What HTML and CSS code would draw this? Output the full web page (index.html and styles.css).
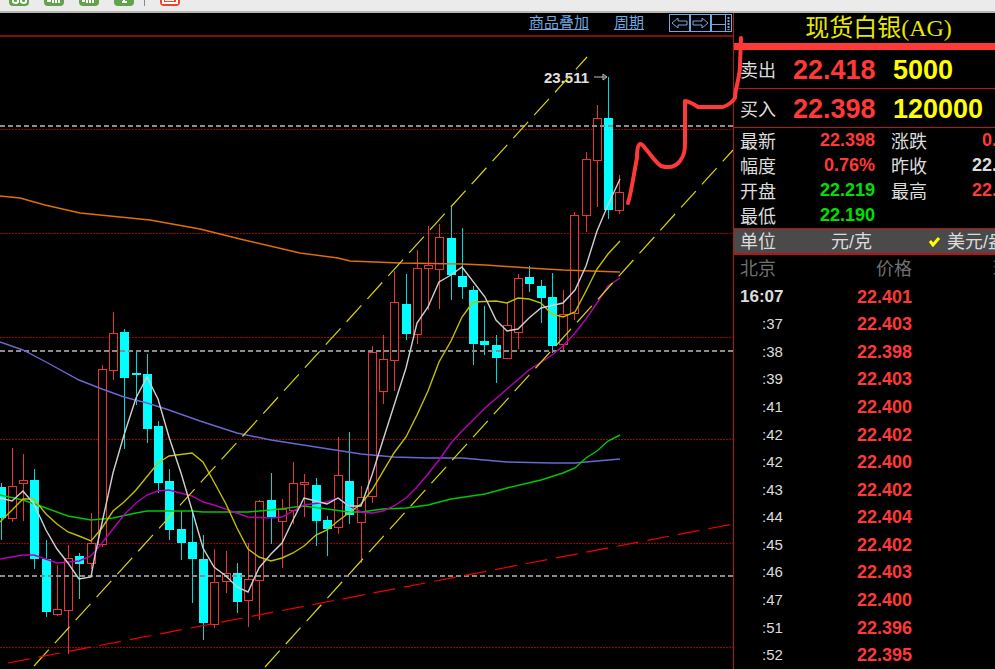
FILE: index.html
```html
<!DOCTYPE html>
<html lang="zh-CN">
<head>
    <meta charset="UTF-8">
    <title>现货白银(AG)</title>
    <meta name="viewport" content="width=device-width, initial-scale=1">
    <link rel="stylesheet" href="styles.css">
</head>
<body>
    <header class="toolbar">
        <button class="tool" aria-label="工具一"><svg width="20" height="20"><path d="M4 12v4q3 2 5 0v-4M12 12v4q3 2 5 0v-4"/></svg></button>
        <button class="tool" aria-label="工具二"><svg width="20" height="20"><path d="M3 15h4M9 17v-4M12 17v-4M15 17v-4"/></svg></button>
        <button class="tool" aria-label="工具三"><svg width="20" height="20"><path d="M3 15h3M8 17v-4M11 17v-4M14 17v-4"/></svg></button>
        <button class="tool" aria-label="工具四"><svg width="20" height="20"><path d="M10 9v7M8 16h5"/></svg></button>
        <span class="separator"></span>
        <button class="tool alert" aria-label="提醒"><svg width="20" height="20"><path d="M3 10v7h14v-7M5 14h9"/></svg></button>
    </header>

    <main class="terminal">
        <section class="chart-panel">
            <nav class="chart-nav">
                <a href="#">商品叠加</a>
                <a href="#">周期</a>
                <div class="nav-buttons">
                    <button aria-label="向左"><svg width="19" height="16"><path d="M2 8l6-5v3h9v4H8v3z"/></svg></button>
                    <button aria-label="向右"><svg width="19" height="16"><path d="M17 8l-6-5v3H2v4h9v3z"/></svg></button>
                    <button aria-label="布局"><svg width="19" height="16"><path d="M0 9.5h13M13.5 0v16"/><path class="dots" d="M16.5 2v13"/></svg></button>
                </div>
            </nav>
            <div class="chart">
                <svg id="kline" viewBox="0 37 733 632" preserveAspectRatio="none">
                    <g class="grid">
                        <path d="M0 129.5H733M0 233.5H733M0 337.5H733M0 439.5H733M0 543.5H733M0 647.5H733"/>
                    </g>
                    <g id="candles"></g>
                    <g class="level">
                        <path d="M0 126H733M0 351H733M0 576H733"/>
                    </g>
                    <g id="averages"></g>
                    <text class="peak" x="544" y="83">23.511</text>
                    <path class="channel" d="M34 666L587 57"/>
                    <path class="channel" d="M265 667L733 150"/>
                    <path class="support" d="M8 663L733 524"/>
                    <path class="arrow" d="M594 77H606M603 74L607 77L603 80z"/>
                </svg>
            </div>
        </section>

        <aside class="quote">
            <h1>现货白银(AG)</h1>
            <div class="deal"><span>卖出</span><b class="up">22.418</b><b class="volume">5000</b></div>
            <div class="deal"><span>买入</span><b class="up">22.398</b><b class="volume">120000</b></div>
            <div class="stats">
                <span>最新</span><b class="up">22.398</b><span>涨跌</span><b class="up">0.</b>
                <span>幅度</span><b class="up">0.76%</b><span>昨收</span><b>22.</b>
                <span>开盘</span><b class="down">22.219</b><span>最高</span><b class="up">22.</b>
                <span>最低</span><b class="down">22.190</b>
            </div>
            <div class="unit">
                <span>单位</span>
                <span class="gram">元/克</span>
                <svg width="12" height="12"><path d="M1 6l3 4l6-7"/></svg>
                <span>美元/盎</span>
            </div>
            <div class="ticks">
                <table>
                    <thead>
                        <tr><th>北京</th><th>价格</th><th>现</th></tr>
                    </thead>
                    <tbody id="ticks"></tbody>
                </table>
            </div>
        </aside>

        <!-- hand-drawn forecast, runs from the last candle over the quote panel -->
        <svg class="forecast" width="995" height="669">
            <path d="M628 203C632 190 634 172 637 158C637 143 640 141 645 148C651 155 655 162 661 166C668 168 675 168 680 161C685 155 685 148 685 140V101Q691 102 698 107H723Q731 104 735 98C735 88 740 78 740 65L741 38"/>
        </svg>
    </main>

    <script>
        const step = 11.25;

        // [direction, high, body top, body bottom, low]
        const candles = [
            ['d', 483, 487, 518, 540], ['u', 448, 486, 519, 522], ['u', 454, 480, 484, 521],
            ['d', 469, 480, 559, 569], ['d', 540, 559, 612, 617], ['u', 565, 609, 615, 616],
            ['u', 545, 558, 611, 654], ['d', 553, 556, 564, 599], ['u', 513, 543, 564, 569],
            ['u', 365, 369, 545, 547], ['u', 312, 333, 371, 380], ['d', 329, 332, 378, 449],
            ['d', 350, 373, 375, 405], ['d', 354, 374, 429, 443], ['d', 421, 426, 483, 493],
            ['d', 469, 481, 530, 540], ['d', 511, 529, 543, 560], ['d', 510, 542, 559, 603],
            ['d', 535, 559, 623, 640], ['u', 549, 582, 625, 628], ['u', 551, 573, 582, 593],
            ['d', 563, 573, 602, 613], ['u', 543, 579, 601, 627], ['u', 500, 501, 581, 620],
            ['d', 473, 500, 517, 544], ['u', 499, 509, 522, 568], ['u', 462, 483, 511, 524],
            ['u', 474, 482, 485, 517], ['d', 478, 485, 521, 546], ['d', 516, 520, 529, 556],
            ['u', 437, 475, 528, 534], ['d', 432, 481, 515, 524], ['u', 486, 497, 523, 563],
            ['u', 346, 352, 497, 503], ['u', 335, 359, 392, 404], ['u', 271, 302, 361, 391],
            ['d', 274, 304, 334, 340], ['u', 250, 268, 335, 344], ['u', 226, 265, 269, 310],
            ['u', 224, 237, 270, 309], ['d', 207, 238, 275, 300], ['d', 228, 276, 287, 299],
            ['d', 286, 290, 344, 365], ['d', 306, 341, 345, 355], ['d', 335, 345, 358, 383],
            ['u', 302, 325, 359, 359], ['u', 274, 278, 333, 349], ['d', 266, 277, 284, 292],
            ['d', 280, 286, 298, 323], ['d', 273, 297, 346, 353], ['u', 290, 314, 345, 350],
            ['u', 212, 215, 314, 320], ['u', 152, 159, 216, 232], ['u', 105, 118, 161, 207],
            ['d', 77, 118, 210, 219], ['u', 175, 192, 211, 214]
        ];

        document.getElementById('candles').innerHTML = candles.map(([dir, high, top, bottom, low], i) => {
            const x = Math.floor(i * step + 1) + 0.5;
            const body = dir === 'u'
                ? `<rect x="${x - 4}" y="${top + 0.5}" width="8" height="${Math.max(bottom - top - 1, 1)}"/>`
                : `<rect x="${x - 4.5}" y="${top}" width="9" height="${bottom - top}"/>`;
            return `<g class="${dir === 'u' ? 'rise' : 'fall'}"><path d="M${x} ${high}V${top}M${x} ${bottom}V${low}"/>${body}</g>`;
        }).join('');

        const averages = {
            orange: '0,196 20,198 45,205 80,213 110,216 150,220 200,229 240,239 300,253 338,258 350,261 400,263 462,264 485,265 529,268 563,270 620,272',
            blue: '0,342 23,350 46,362 79,380 102,389 124,397 147,403 169,410 200,421 237,433 271,440 316,447 361,454 394,457 428,458 462,458 507,462 552,463 575,463 597,461 620,459',
            green: '0,495 23,500 46,508 68,516 91,520 113,518 136,513 147,511 192,511 203,512 248,512 271,510 304,506 327,509 349,512 361,512 383,509 406,508 428,505 451,499 485,494 507,488 541,480 563,473 575,468 586,458 597,451 608,441 620,435',
            magenta: '0,559 23,555 34,555 57,563 79,561 91,556 102,543 124,515 136,503 147,495 158,491 169,490 192,496 203,502 214,505 248,517 271,518 282,517 304,505 327,502 338,498 349,506 361,512 372,513 383,511 394,506 406,498 417,487 428,474 439,460 451,443 462,431 485,408 507,389 529,370 552,355 563,346 575,333 586,319 597,303 608,286 620,278',
            yellow: '0,522 23,499 34,499 46,514 57,524 68,532 79,536 91,541 102,528 113,511 124,502 136,490 158,463 169,456 192,453 203,462 214,482 226,504 237,528 248,549 259,557 271,561 282,558 293,553 304,546 316,535 327,530 338,521 361,504 372,490 394,453 406,437 417,415 428,391 439,362 451,341 462,317 473,302 496,301 507,303 518,298 529,299 541,303 552,314 563,317 575,312 586,291 597,269 608,254 620,241',
            white: '0,498 12,501 23,491 34,504 46,530 57,549 68,563 79,579 91,577 95,555 102,523 113,473 124,435 136,398 147,377 158,399 169,437 181,473 192,510 203,548 214,567 226,576 237,587 248,592 259,568 271,554 282,543 293,520 304,498 316,501 327,504 338,498 349,506 361,506 372,475 383,440 406,368 417,323 428,307 439,282 451,275 462,267 485,297 496,320 507,331 518,329 529,318 541,308 563,303 575,290 586,266 597,231 608,205 620,179'
        };

        document.getElementById('averages').innerHTML = Object.entries(averages)
            .map(([name, points]) => `<polyline class="${name}" points="${points}"/>`).join('');

        const ticks = [
            ['16:07', '22.401'], [':37', '22.403'], [':38', '22.398'], [':39', '22.403'],
            [':41', '22.400'], [':42', '22.402'], [':42', '22.400'], [':43', '22.402'],
            [':44', '22.404'], [':45', '22.402'], [':46', '22.403'], [':47', '22.400'],
            [':51', '22.396'], [':52', '22.395']
        ];

        document.getElementById('ticks').innerHTML = ticks
            .map(([time, price]) => `<tr><td>${time}</td><td>${price}</td><td></td></tr>`).join('');
    </script>
</body>
</html>
```
FILE: styles.css
```css
:root {
    --line: #b81414;
    --up: #ff3838;
    --down: #00e000;
    --text: #dcdcdc;
    --link: #70a8e0;
}

* {
    box-sizing: border-box;
}

body {
    display: flex;
    flex-direction: column;
    height: 100vh;
    margin: 0;
    overflow: hidden;
    background: #000;
    color: var(--text);
    font-family: "Liberation Sans", "Noto Sans CJK SC", sans-serif;
    font-size: 18px;
}

button {
    padding: 0;
    border: 0;
    background: none;
}

svg {
    display: block;
}

.toolbar {
    display: flex;
    flex: none;
    align-items: flex-end;
    gap: 15px;
    height: 13px;
    padding: 0 9px 5px;
    background: #ebebeb;
    border-bottom: 2px solid #b8b4b0;
    overflow: hidden;
}

.tool {
    flex: none;
    width: 20px;
    height: 20px;
    border-radius: 4px;
    background: #60a34c;
}

.tool path {
    fill: none;
    stroke: #fff;
    stroke-width: 2;
}

.alert {
    background: #f04428;
}

.separator {
    width: 1px;
    height: 20px;
    margin-left: -5px;
    background: #888;
}

.terminal {
    display: flex;
    flex: 1;
    min-height: 0;
}

.chart-panel {
    display: flex;
    flex: 1;
    flex-direction: column;
    min-width: 0;
}

.chart-nav {
    display: flex;
    flex: none;
    align-items: center;
    justify-content: flex-end;
    gap: 25px;
    height: 24px;
    padding-right: 1px;
    padding-bottom: 2px;
    border-bottom: 2px solid #801008;
    font-size: 15px;
    line-height: 18px;
}

.chart-nav a {
    color: var(--link);
}

.nav-buttons {
    display: flex;
}

.nav-buttons button {
    width: 21px;
    height: 18px;
    border: 1px solid var(--link);
    overflow: hidden;
}

.nav-buttons path {
    fill: none;
    stroke: var(--link);
}

.nav-buttons .dots {
    stroke-width: 2;
    stroke-dasharray: 2 1;
}

.chart {
    flex: 1;
    min-height: 0;
}

#kline {
    width: 100%;
    height: 100%;
}

#kline path,
#kline polyline {
    fill: none;
}

.grid {
    stroke: #a00000;
    stroke-dasharray: 2 1;
}

.level {
    stroke: #8c8c8c;
    stroke-width: 2;
    stroke-dasharray: 5 3;
}

.rise {
    fill: none;
    stroke: #e83434;
}

.fall {
    fill: #00ffff;
    stroke: #00d8d8;
}

.fall rect {
    stroke: none;
}

.rise rect {
    fill: #000;
}

#averages {
    stroke-width: 1.4;
}

.orange { stroke: #e07000; }
.blue { stroke: #6868d0; }
.green { stroke: #00c800; }
.magenta { stroke: #b800b8; }
.yellow { stroke: #c0c000; }
.white { stroke: #d0d0d0; }

.channel {
    stroke: #d8d800;
    stroke-width: 1.2;
    stroke-dasharray: 22 9;
}

.support {
    stroke: #f00000;
    stroke-width: 1.2;
    stroke-dasharray: 22 9;
}

.peak {
    fill: #e0e0e0;
    font-size: 15px;
    font-weight: bold;
}

.arrow {
    stroke: #c0c0c0;
}

.quote {
    display: flex;
    flex: 0 0 262px;
    flex-direction: column;
    border-left: 1px solid var(--line);
    overflow: hidden;
}

.quote h1 {
    flex: none;
    height: 37px;
    margin: 0;
    padding-left: 28px;
    border-bottom: 7px solid var(--up);
    color: #e8e800;
    font-family: "Liberation Serif", "Noto Sans CJK SC", serif;
    font-size: 24px;
    font-weight: normal;
    line-height: 30px;
    text-align: center;
}

.deal {
    display: grid;
    flex: none;
    grid-template-columns: 53px 100px 1fr;
    align-items: center;
    height: 39px;
    padding-left: 6px;
    border-bottom: 1px solid var(--line);
}

.deal b {
    padding-top: 2px;
    font-size: 27px;
}

.up {
    color: var(--up);
}

.down {
    color: var(--down);
}

.volume {
    color: #ffff00;
}

.stats {
    display: grid;
    flex: none;
    grid-template-columns: 54px 81px 52px 70px;
    grid-auto-rows: 25px;
    align-items: center;
    padding-left: 6px;
}

.stats b {
    text-align: right;
}

.stats span {
    padding-bottom: 2px;
}

.stats span:nth-child(4n + 3) {
    padding-left: 16px;
}

.unit {
    display: flex;
    flex: none;
    align-items: center;
    height: 27px;
    padding-left: 6px;
    background: #4a4a4a;
    border-top: 1px solid var(--line);
    border-bottom: 2px solid var(--line);
    white-space: nowrap;
}

.unit span {
    padding-bottom: 2px;
}

.unit svg {
    flex: none;
    margin: 0 6px 0 57px;
}

.unit path {
    fill: none;
    stroke: #ffff00;
    stroke-width: 3;
}

.gram {
    margin-left: 55px;
}

.ticks {
    flex: 1;
    min-height: 0;
}

.ticks table {
    width: 100%;
    height: 100%;
    border-collapse: collapse;
    table-layout: fixed;
}

.ticks th,
.ticks td {
    padding: 0;
    line-height: 20px;
    white-space: nowrap;
}

.ticks th {
    height: 28px;
    color: #707070;
    font-weight: normal;
    text-align: left;
}

.ticks th:first-child {
    width: 123px;
    padding-left: 6px;
}

.ticks th:nth-child(2) {
    width: 136px;
    padding-left: 19px;
}

.ticks td:first-child {
    padding-left: 28px;
    font-size: 15px;
}

.ticks tr:first-child td:first-child {
    padding-left: 6px;
    font-size: 17px;
    font-weight: bold;
}

.ticks td:nth-child(2) {
    color: var(--up);
    font-weight: bold;
}

.forecast {
    position: absolute;
    top: 0;
    left: 0;
    pointer-events: none;
}

.forecast path {
    fill: none;
    stroke: var(--up);
    stroke-width: 4;
    stroke-linecap: round;
    stroke-linejoin: round;
}
```
